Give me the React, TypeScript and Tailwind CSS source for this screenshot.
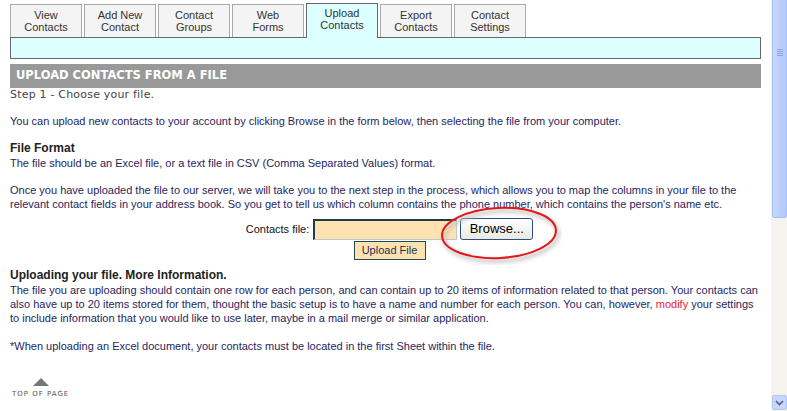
import React from 'react';

const tabs = [
  { top: 'View', bottom: 'Contacts' },
  { top: 'Add New', bottom: 'Contact' },
  { top: 'Contact', bottom: 'Groups' },
  { top: 'Web', bottom: 'Forms' },
  { top: 'Upload', bottom: 'Contacts', active: true },
  { top: 'Export', bottom: 'Contacts' },
  { top: 'Contact', bottom: 'Settings' },
];

const Tabs: React.FC = () => (
  <div className="flex items-end gap-[2px] h-[33px]">
    {tabs.map((t) =>
      t.active ? (
        <div
          key={t.top + t.bottom}
          className="relative z-10 -mb-[1px] w-[72px] h-[35px] border border-b-0 border-[#666] bg-[#dcffff] pt-[3px] text-center text-[11px] leading-[12px] text-[#333]"
        >
          {t.top}
          <br />
          {t.bottom}
        </div>
      ) : (
        <div
          key={t.top + t.bottom}
          className="w-[72px] h-[33px] border border-b-0 border-[#aaa] bg-[#f4f4f4] pt-[4px] text-center text-[11px] leading-[12px] text-[#333]"
        >
          {t.top}
          <br />
          {t.bottom}
        </div>
      )
    )}
  </div>
);

const Scrollbar: React.FC = () => (
  <div className="w-[16px] h-full flex flex-col bg-[#f4f3ee]">
    <div className="h-[218px] w-[15px] ml-[1px] rounded-b-[3px] border border-t-0 border-[#a9bff2] bg-gradient-to-r from-[#c8d7fd] via-[#bccffb] to-[#b6cafa] flex flex-col items-center">
      <div className="mt-[49px] flex flex-col gap-[1px]">
        <div className="w-[6px] h-[1px] bg-[#8aa6ee]" />
        <div className="w-[6px] h-[1px] bg-[#8aa6ee]" />
        <div className="w-[6px] h-[1px] bg-[#8aa6ee]" />
        <div className="w-[6px] h-[1px] bg-[#8aa6ee]" />
      </div>
    </div>
    <div className="flex-1" />
    <div className="h-[15px] w-[15px] ml-[1px] mb-[1px] rounded-[2px] border border-[#b3c6f3] bg-[#c6d6fc] flex items-center justify-center">
      <svg width="9" height="6" viewBox="0 0 9 6">
        <path d="M1 1 L4.5 4.5 L8 1" fill="none" stroke="#4d6185" strokeWidth="1.6" />
      </svg>
    </div>
  </div>
);

export default function App() {
  return (
    <div
      className="w-[787px] h-[411px] overflow-hidden bg-white flex"
      style={{ fontFamily: '"Liberation Sans", Arial, sans-serif' }}
    >
      <div className="flex-1 px-[10px] pt-[4px] relative">
        <Tabs />
        <div className="h-[22px] border border-[#666] bg-[#dcffff]" />

        <div className="mt-[5px] h-[24px] bg-[#999] pl-[6px] flex items-center">
          <span
            className="text-white font-bold text-[11.5px]"
            style={{ fontFamily: '"DejaVu Sans", Verdana, sans-serif' }}
          >
            UPLOAD CONTACTS FROM A FILE
          </span>
        </div>

        <div
          className="text-[11px] leading-[14px] tracking-[0.2px] text-[#444]"
          style={{ fontFamily: '"DejaVu Sans", Verdana, sans-serif' }}
        >
          Step 1 - Choose your file.
        </div>

        <div className="text-[11px] leading-[14px] text-[#262660]">
          <p className="mt-[12px]">
            You can upload new contacts to your account by clicking Browse in the form below, then selecting the file from your computer.
          </p>
          <p className="mt-[13px] text-[12px] font-bold text-[#222]">File Format</p>
          <p className="mt-[1px]">
            The file should be an Excel file, or a text file in CSV (Comma Separated Values) format.
          </p>
          <p className="mt-[13px]">
            Once you have uploaded the file to our server, we will take you to the next step in the process, which allows you to map the columns in your file to the relevant contact fields in your address book. So you get to tell us which column contains the phone number, which contains the person's name etc.
          </p>
        </div>

        <div className="relative mt-[7px] pl-[8px] flex flex-col items-center">
          <div className="flex items-center">
            <span className="text-[11px] text-[#111] mr-[4px]">Contacts file:</span>
            <div className="w-[144px] h-[21px] bg-[#ffe2b0] border-t-2 border-l-2 border-r border-b border-t-[#1f3a48] border-l-[#1f3a48] border-r-[#b8c8cc] border-b-[#b8c8cc]" />
            <div className="ml-[3px] w-[73px] h-[22px] rounded-[3px] border border-[#2a4f7a] bg-gradient-to-b from-white to-[#ebe9df] flex items-center justify-center text-[13px] text-black">
              Browse...
            </div>
          </div>
          <div className="mt-[1px] w-[72px] h-[19px] border border-[#1f4a58] bg-[#ffe2b0] flex items-center justify-center text-[11px] text-[#1a3355]">
            Upload File
          </div>
          <svg
            className="absolute left-[428px] top-[-13px] pointer-events-none"
            width="124"
            height="60"
            viewBox="0 0 124 60"
          >
            <defs>
              <filter id="shadow" x="-20%" y="-30%" width="140%" height="160%">
                <feGaussianBlur stdDeviation="2" />
              </filter>
            </defs>
            <ellipse cx="63" cy="31" rx="57" ry="25" fill="none" stroke="#bbb" strokeWidth="3" filter="url(#shadow)" transform="rotate(-3 63 31)" />
            <ellipse cx="61" cy="28" rx="57" ry="25" fill="none" stroke="#e5161a" strokeWidth="2" transform="rotate(-3 61 28)" />
          </svg>
        </div>

        <div className="mt-[8px] text-[11px] leading-[14px] text-[#262660]">
          <p className="text-[12px] font-bold text-[#222]">Uploading your file. More Information.</p>
          <p className="mt-[1px]">
            The file you are uploading should contain one row for each person, and can contain up to 20 items of information related to that person. Your contacts can also have up to 20 items stored for them, thought the basic setup is to have a name and number for each person. You can, however, <span className="text-[#e8202a]">modify</span> your settings to include information that you would like to use later, maybe in a mail merge or similar application.
          </p>
          <p className="mt-[14px]">
            *When uploading an Excel document, your contacts must be located in the first Sheet within the file.
          </p>
        </div>

        <div className="mt-[25px] ml-[2px] w-fit flex flex-col items-center">
          <svg width="16" height="8" viewBox="0 0 16 8">
            <path d="M8 0 L16 8 L0 8 Z" fill="#777" />
          </svg>
          <span
            className="mt-[4px] whitespace-nowrap text-[7px] leading-[8px] tracking-[1px] text-[#555]"
            style={{ fontFamily: '"DejaVu Sans", Verdana, sans-serif' }}
          >
            TOP OF PAGE
          </span>
        </div>
      </div>
      <Scrollbar />
    </div>
  );
}
